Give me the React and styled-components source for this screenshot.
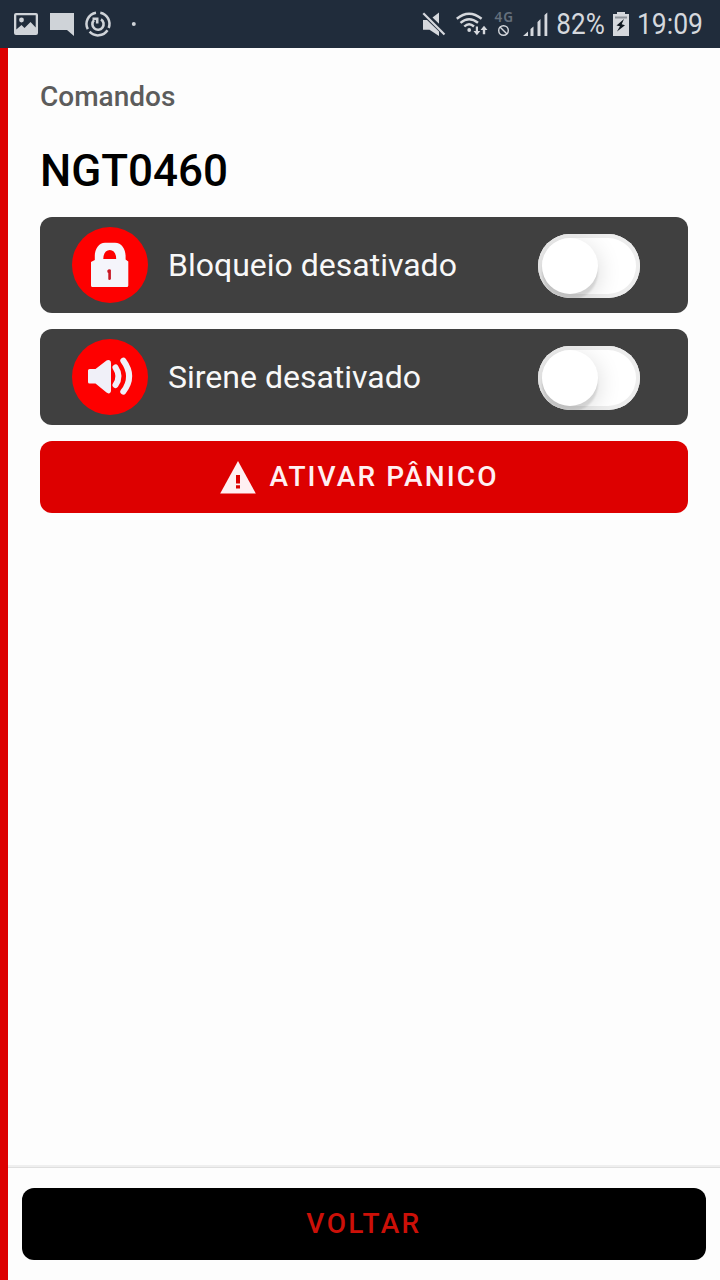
import React, { useState } from 'react';
import styled, { createGlobalStyle } from 'styled-components';

const GlobalStyle = createGlobalStyle`
  * {
    box-sizing: border-box;
  }

  body {
    margin: 0;
    background: #fdfdfd;
    font-family: Roboto, sans-serif;
  }

  button {
    font-family: inherit;
  }
`;

const commands = [
  { id: 'bloqueio', name: 'Bloqueio', icon: 'lock' },
  { id: 'sirene', name: 'Sirene', icon: 'siren' },
];

const LockIcon = () => (
  <svg width="76" height="76" viewBox="72 227 76 76">
    <path
      fill="#f5f5fb"
      fillRule="evenodd"
      d="M94.8 260V256C94.8 249 99 242.8 105 242.8H115C121.5 242.8 125.6 249 125.6 256V259.5L128.3 261.5V285.5Q128.3 287 126.8 287H92.5Q91 287 91 285.5V262ZM103.3 259H116.2C116.2 253 113.5 250 109.8 250S103.3 253 103.3 259Z"
    />
    <path fill="#c81824" d="M107.3 270.5Q109 268.3 110.9 269.8V279Q110 280.5 108.3 279.6V273Q107 272.5 107.3 270.5Z" />
  </svg>
);

const SirenIcon = () => (
  <svg width="76" height="76" viewBox="72 339 76 76">
    <path
      fill="#f0f0f8"
      d="M89.5 369H95.5L106.5 360.5Q108 359.5 109.5 360.3Q111 361 111 363V391Q111 392.5 109.5 393.2Q108 393.8 106.5 392.6L95.5 383.5H89.5Q88 383.5 88 382V370.5Q88 369 89.5 369Z"
    />
    <path fill="none" stroke="#f0f0f8" strokeWidth="6" strokeLinecap="round" d="M115.5 367.5Q121.5 376.5 115.5 385" />
    <path fill="none" stroke="#f0f0f8" strokeWidth="6" strokeLinecap="round" d="M123.3 360.6Q135 376.5 123.3 391.7" />
  </svg>
);

const WarningIcon = () => (
  <svg width="36" height="34" viewBox="220 460 36 34">
    <path fill="#fff0f2" d="M238 461L255.8 493.5H220.2Z" />
    <path fill="#dc0000" d="M236 475H240V483.5H236ZM236 485.2H240V488.5H236Z" />
  </svg>
);

const StatusBar = () => (
  <Status>
    <svg width="140" height="48" viewBox="0 0 140 48" fill="#cfd3d8">
      <path
        fillRule="evenodd"
        d="M16 13H36Q38 13 38 15V33Q38 35 36 35H16Q14 35 14 33V15Q14 13 16 13ZM16.3 15.3V29.5L21.5 25L24.5 28L30.5 22L35.7 27.5V15.3Z"
      />
      <circle cx="21.5" cy="20" r="2.4" />
      <path d="M50 13H74V36L67 30H50Z" />
      <g fill="none" stroke="#cfd3d8" strokeWidth="2.5">
        <path d="M96 12.7A11.4 11.4 0 0 0 87.8 29.2M89.6 31.7A11.4 11.4 0 0 0 107.5 30.3M108.7 28A11.4 11.4 0 0 0 100.3 12.7" />
        <path strokeWidth="2.6" d="M101 19.4A5.6 5.6 0 1 1 94 20.2M92.5 18.8H97.2V23.5" />
      </g>
      <circle cx="133.8" cy="24" r="2" />
    </svg>
    <StatusRight>
      <svg width="136" height="48" viewBox="416 0 136 48" fill="#d5d8dd">
        <path d="M423 20H427L439 31.5V36L429.5 29.7H423ZM432.5 17.5L439 12.5V23.8Z" />
        <path fill="none" stroke="#d5d8dd" strokeWidth="2.2" d="M423.3 13.3L444.5 34.5" />
        <g fill="none" stroke="#d5d8dd" strokeWidth="2.4">
          <path d="M456.8 18.7Q469 8.7 481.6 18.7" />
          <path d="M460.5 22.8Q469 15.5 478 22.8" />
          <path d="M464.3 26.5Q469 22 474 26.5" />
        </g>
        <circle cx="469.2" cy="30" r="1.9" />
        <path d="M475.8 26.5H478V31H480.3L476.9 35.3L473.5 31H475.8ZM482.8 34.3V30H480.5L484 25.7L487.5 30H485.2V34.3Z" />
        <text x="494.5" y="22" fontFamily="Noto Sans" fontWeight="600" fontSize="13.5" fill="#65707d" textLength="18.5">
          4G
        </text>
        <circle cx="503.5" cy="30.5" r="4.8" fill="none" stroke="#d5d8dd" strokeWidth="1.4" />
        <path fill="none" stroke="#d5d8dd" strokeWidth="1.4" d="M500 27L507 34" />
        <path d="M523 36L528 31.5V36ZM530.5 36V29L533.5 26.5V36ZM537.5 36V22L540.5 19V36ZM544.5 36V15L547.3 12.5V36Z" />
      </svg>
      <StatusText $width={56} $indent={5}>82%</StatusText>
      <svg width="28" height="48" viewBox="608 0 28 48">
        <path fill="#d5d8dd" d="M617 12H625V14H629V36H613V14H617Z" />
        <path fill="#8b9198" d="M615 16.5H627V18.5H615Z" />
        <path fill="#101820" d="M624 19L616.5 25.5L620 26.3L617 31.5L625 25.2L621.7 24.3Z" />
      </svg>
      <StatusText $width={68} $indent={1} $scale={0.885}>19:09</StatusText>
    </StatusRight>
  </Status>
);

const App = () => {
  const [active, setActive] = useState({});

  const toggleCommand = (id) => {
    setActive(prevState => ({ ...prevState, [id]: !prevState[id] }));
  };

  return (
    <>
      <GlobalStyle />
      <Screen>
        <StatusBar />
        <Page>
          <Content>
            <Subtitle>Comandos</Subtitle>
            <Plate>NGT0460</Plate>

            <CommandList>
              {commands.map((command) => (
                <CommandRow key={command.id}>
                  <IconCircle>
                    {command.icon === 'lock' ? <LockIcon /> : <SirenIcon />}
                  </IconCircle>
                  <CommandLabel>
                    {command.name} {active[command.id] ? 'ativado' : 'desativado'}
                  </CommandLabel>
                  <Toggle
                    type="button"
                    role="switch"
                    aria-checked={!!active[command.id]}
                    $on={active[command.id]}
                    onClick={() => toggleCommand(command.id)}
                  >
                    <ToggleKnob />
                  </Toggle>
                </CommandRow>
              ))}
              <PanicButton type="button">
                <WarningIcon />
                <span>ATIVAR PÂNICO</span>
              </PanicButton>
            </CommandList>
          </Content>

          <Footer>
            <BackButton type="button">VOLTAR</BackButton>
          </Footer>
        </Page>
      </Screen>
    </>
  );
};

const Screen = styled.div`
  display: flex;
  flex-direction: column;
  width: 720px;
  height: 1280px;
  overflow: hidden;
  background: #fdfdfd;
`;

const Status = styled.header`
  display: flex;
  justify-content: space-between;
  flex: none;
  height: 48px;
  background: #202c3b;
`;

const StatusRight = styled.div`
  display: flex;
  align-items: center;
  padding-right: 16px;
`;

const StatusText = styled.span`
  width: ${(props) => props.$width}px;
  padding-left: ${(props) => props.$indent}px;
  color: #d5d8dd;
  font-size: 30px;
  line-height: 50px;
  white-space: nowrap;
  transform: scaleX(${(props) => props.$scale || 0.87});
  transform-origin: left center;
`;

const Page = styled.main`
  display: flex;
  flex-direction: column;
  flex: 1;
  border-left: 8px solid #dd0000;
`;

const Content = styled.section`
  flex: 1;
  padding: 32px 32px 0;
`;

const Subtitle = styled.h2`
  margin: 0;
  color: #5c5c5c;
  font-size: 28px;
  font-weight: 500;
  line-height: 34px;
`;

const Plate = styled.h1`
  margin: 31px 0 20px;
  color: #000;
  font-size: 44px;
  font-weight: 500;
  line-height: 52px;
`;

const CommandList = styled.div`
  display: flex;
  flex-direction: column;
  gap: 16px;
`;

const CommandRow = styled.div`
  display: flex;
  align-items: center;
  height: 96px;
  padding: 0 48px 0 32px;
  border-radius: 12px;
  background: #404040;
`;

const IconCircle = styled.div`
  width: 76px;
  height: 76px;
  border-radius: 50%;
  background: #fe0000;

  svg {
    display: block;
  }
`;

const CommandLabel = styled.span`
  flex: 1;
  margin-left: 20px;
  color: #f8f8f8;
  font-size: 32px;
  line-height: 40px;
`;

const Toggle = styled.button`
  display: flex;
  justify-content: ${(props) => (props.$on ? 'flex-end' : 'flex-start')};
  width: 102px;
  height: 64px;
  margin-top: 2px;
  padding: 4px;
  border: 0;
  border-radius: 32px;
  overflow: hidden;
  background: ${(props) => (props.$on ? '#dd0000' : '#fff')};
  box-shadow: inset 0 0 0 4px #ededed;
  cursor: pointer;
`;

const ToggleKnob = styled.span`
  width: 56px;
  height: 56px;
  border-radius: 50%;
  background: #fff;
  box-shadow: 0 6px 24px rgba(0, 0, 0, 0.16), 0 6px 2px rgba(0, 0, 0, 0.1);
`;

const PanicButton = styled.button`
  display: flex;
  align-items: center;
  justify-content: center;
  gap: 13px;
  height: 72px;
  padding: 0 9px 0 0;
  border: 0;
  border-radius: 12px;
  background: #dd0000;
  color: #fff0f2;
  font-size: 28px;
  font-weight: 500;
  letter-spacing: 2.1px;
  cursor: pointer;

  span {
    padding-bottom: 2px;
  }
`;

const Footer = styled.footer`
  height: 112px;
  padding: 20px 14px;
  background: #fdfdfd;
  box-shadow: 0 -1px 0 #dfdfdf, 0 -3px 0 #efefef;
`;

const BackButton = styled.button`
  width: 100%;
  height: 72px;
  padding: 0 0 2px;
  border: 0;
  border-radius: 12px;
  background: #000;
  color: #cc1008;
  font-size: 28px;
  font-weight: 500;
  letter-spacing: 2.4px;
  cursor: pointer;
`;

export default App;
